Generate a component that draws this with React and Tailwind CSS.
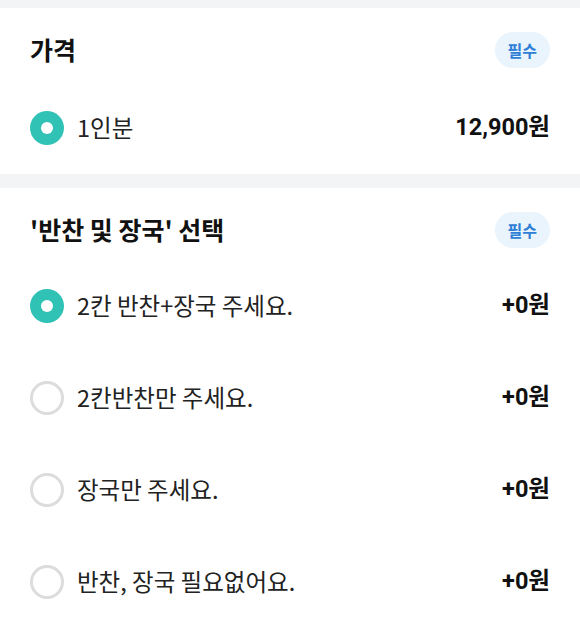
import React from "react";

const font = { fontFamily: '"Noto Sans CJK KR", Roboto, sans-serif' };

const Badge = () => (
  <span className="flex h-9 items-center rounded-full bg-[#e9f4fd] px-[13px] text-[16px] font-bold text-[#2f7fd6]">
    필수
  </span>
);

const Radio = ({ checked }) =>
  checked ? (
    <span className="flex h-[34px] w-[34px] shrink-0 items-center justify-center rounded-full bg-[#30c2b5]">
      <span className="h-[12px] w-[12px] rounded-full bg-white" />
    </span>
  ) : (
    <span className="h-[34px] w-[34px] shrink-0 rounded-full border-[3px] border-[#dcdcdc] bg-white" />
  );

const Option = ({ label, price, checked }) => (
  <div className="flex h-[92px] items-center justify-between">
    <div className="flex items-center gap-[13px]">
      <Radio checked={checked} />
      <span className="text-[23.5px] text-[#222]">{label}</span>
    </div>
    <span className="text-[23.5px] font-bold text-[#111]" style={{ fontFamily: 'Roboto, "Noto Sans CJK KR", sans-serif' }}>
      {price}
    </span>
  </div>
);

const Section = ({ title, children, gap }) => (
  <section className="bg-white px-[30px] pt-6">
    <div className="flex h-9 items-center justify-between">
      <h2 className="text-[25px] font-bold text-[#111]">{title}</h2>
      <Badge />
    </div>
    <div className={gap}>{children}</div>
  </section>
);

export default function App() {
  const sides = [
    { label: "2칸 반찬+장국 주세요.", checked: true },
    { label: "2칸반찬만 주세요." },
    { label: "장국만 주세요." },
    { label: "반찬, 장국 필요없어요." },
  ];

  return (
    <div className="min-h-[624px] w-[580px] bg-[#f2f4f6] pt-2" style={font}>
      <Section title="가격" gap="mt-[14px]">
        <Option label="1인분" price="12,900원" checked />
      </Section>
      <div className="h-[14px]" />
      <Section title="'반찬 및 장국' 선택" gap="mt-3">
        {sides.map((s) => (
          <Option key={s.label} label={s.label} price="+0원" checked={s.checked} />
        ))}
      </Section>
    </div>
  );
}
